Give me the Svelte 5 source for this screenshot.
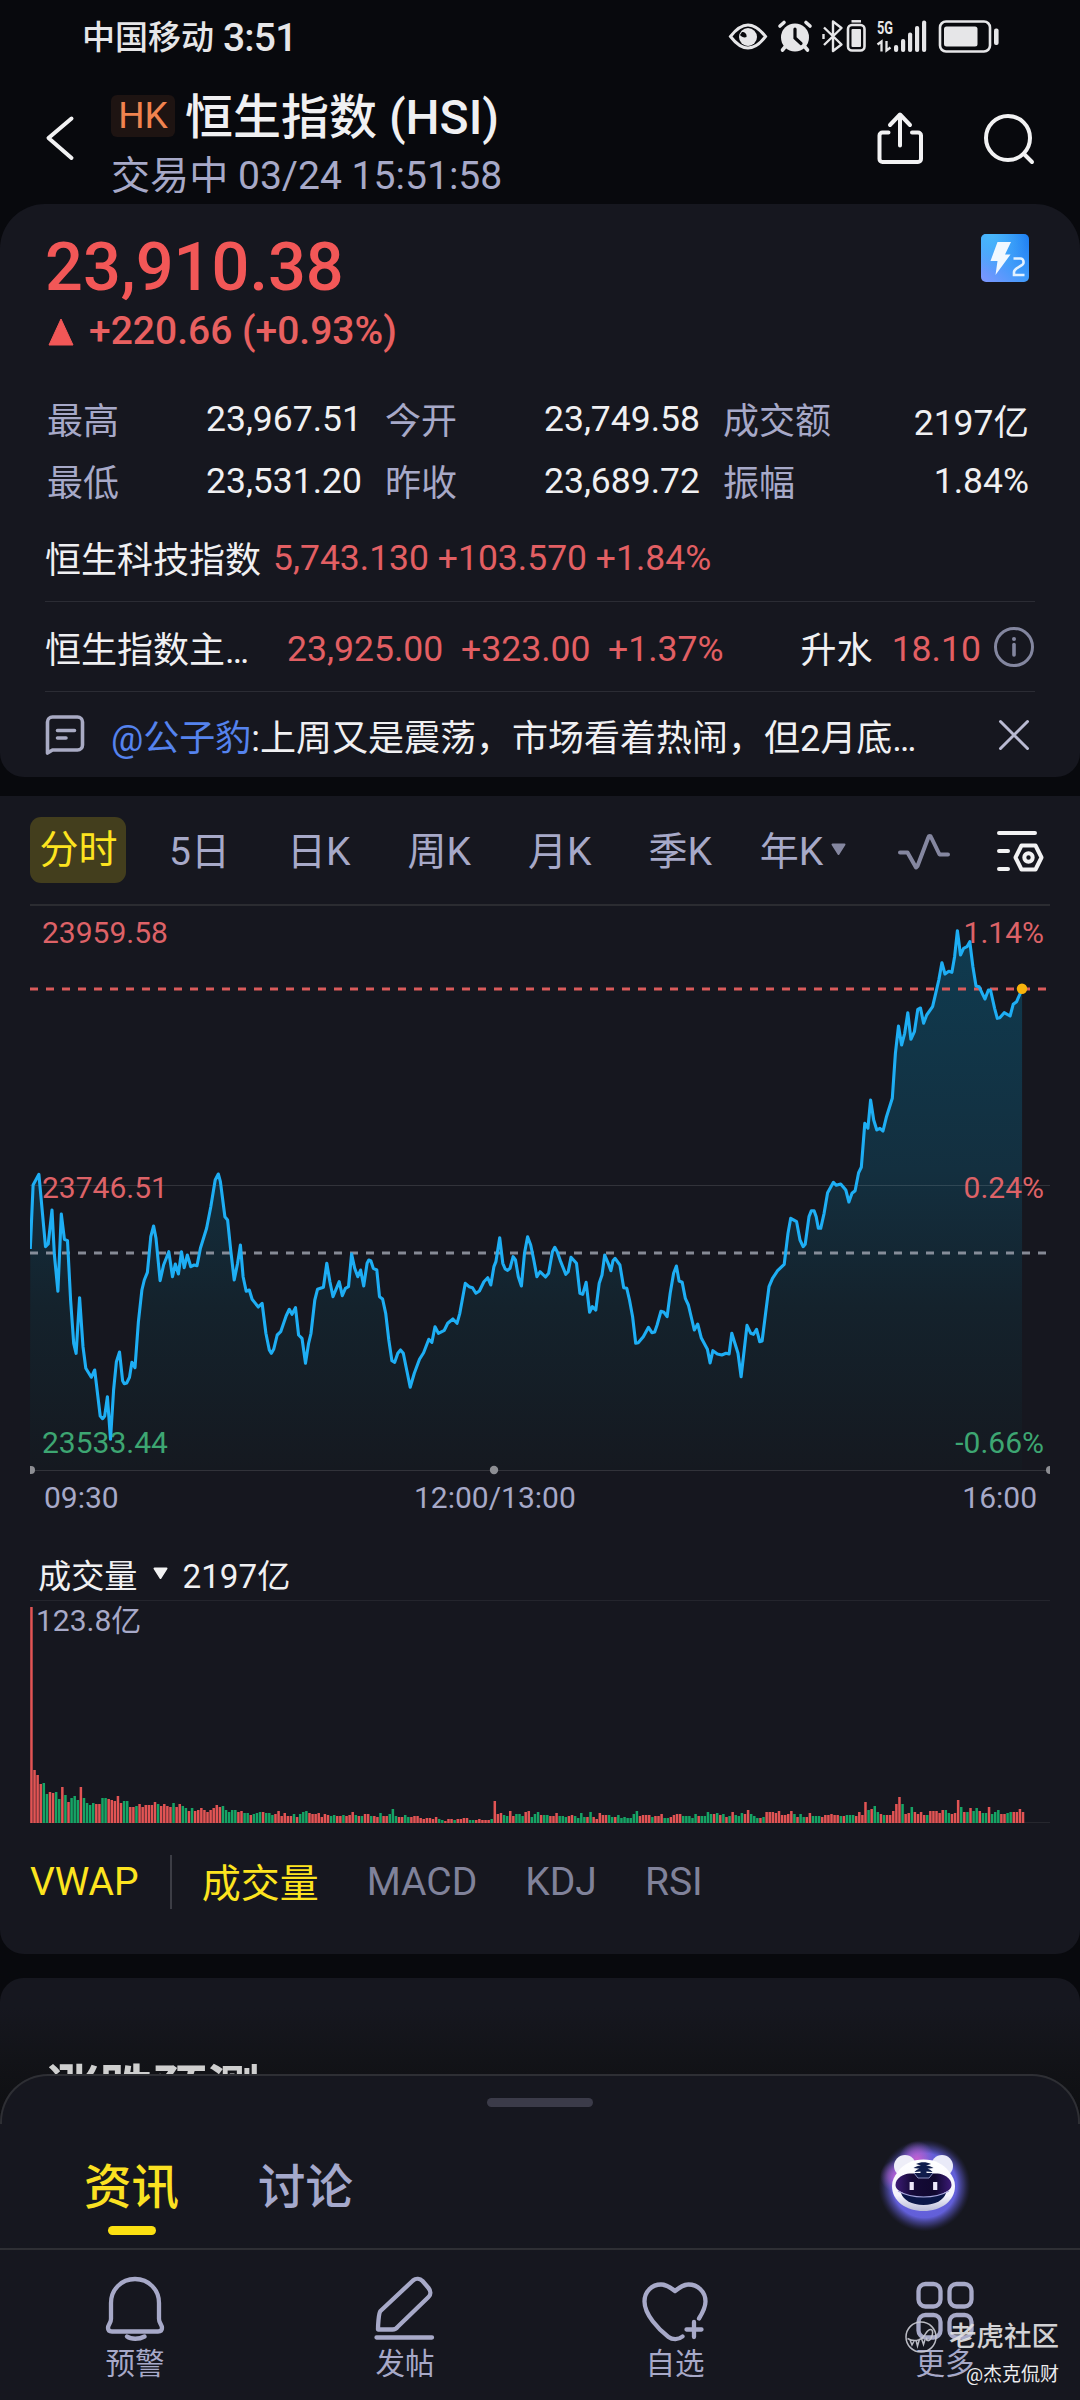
<script>
  const stats = [
    ['最高', '23,967.51'], ['今开', '23,749.58'], ['成交额', '2197亿'],
    ['最低', '23,531.20'], ['昨收', '23,689.72'], ['振幅', '1.84%'],
  ];
  const periods = ['5日', '日K', '周K', '月K', '季K'];
  const indicators = ['MACD', 'KDJ', 'RSI'];

  // Intraday samples: morning and afternoon sessions, x then y in chart units.
  const morning = '88,297 96,105 113,73 132,290 140,282 151,180 158,315 168,424 178,192 187,268 196,272 205,450 214,580 221,610 231,443 241,590 249,655 265,682 275,660 291,798 298,806 304,798 312,740 321,868 330,720 338,635 347,606 356,692 361,701 368,699 376,682 383,637 392,653 402,515 412,420 419,390 428,367 438,260 446,228 453,265 465,392 475,345 490,305 501,380 509,342 518,372 527,305 535,353 544,315 554,350 564,345 572,347 582,295 600,235 612,170 625,90 634,72 640,95 653,200 661,210 670,300 680,390 690,340 698,285 706,380 715,424 724,420 732,448 750,471 761,460 772,550 782,600 788,610 795,597 805,555 815,545 831,497 840,478 848,493 858,473 867,555 877,565 887,640 896,580 903,550 914,450 922,418 939,412 949,340 958,395 967,440 985,395 994,437 1003,415 1012,410 1021,312 1030,355 1039,380 1047,360 1056,408 1066,340 1071,330 1077,333 1084,355 1094,360 1102,440 1111,447 1120,490 1129,570 1138,632 1146,637 1155,610 1163,600 1171,610 1181,660 1191,712 1203,670 1218,628 1230,608 1245,568 1254,577 1263,530 1273,550 1290,541 1300,520 1315,507 1327,520 1335,490 1351,400 1362,410 1372,413 1382,430 1392,423 1405,395 1416,383 1425,405 1434,350 1440,335 1451,263 1460,340 1467,357 1474,361 1481,355 1490,320 1497,330 1505,380 1514,408 1523,310 1532,260 1541,285 1550,330 1559,380';
  const afternoon = '0,365 16,381 25,370 36,305 43,292 50,305 60,335 75,373 82,365 90,322 106,340 116,430 124,433 134,397 144,487 152,470 162,480 172,400 180,375 188,315 198,340 206,362 212,332 218,325 232,345 243,413 252,415 260,450 269,500 278,580 285,578 300,560 315,532 325,548 333,546 340,525 351,484 360,487 369,500 378,430 388,370 396,348 404,393 413,397 422,445 431,465 448,540 458,522 468,563 486,598 494,639 502,602 515,612 528,615 540,610 549,612 557,550 566,580 575,610 584,680 593,600 601,526 612,550 620,553 629,538 638,575 645,573 655,490 665,410 675,385 690,362 709,343 720,250 728,205 745,215 755,270 764,290 770,283 781,200 788,182 796,182 802,200 808,235 815,235 825,190 835,128 852,97 860,106 873,102 888,120 897,156 906,130 915,122 925,68 933,52 937,0 943,-80 952,-65 960,-150 969,-90 978,-60 987,-65 996,-57 1006,-100 1023,-155 1032,-290 1041,-372 1050,-315 1059,-350 1068,-412 1077,-332 1087,-355 1097,-422 1105,-426 1114,-380 1123,-405 1140,-430 1149,-470 1158,-510 1167,-562 1176,-528 1187,-536 1196,-533 1204,-580 1212,-658 1221,-585 1230,-605 1240,-610 1248,-625 1257,-550 1266,-492 1275,-490 1284,-470 1292,-453 1302,-480 1308,-480 1320,-425 1328,-395 1335,-397 1348,-412 1365,-402 1374,-437 1384,-445 1400,-483';
  const parse = (text, shift) =>
    text.split(' ').map((pair) => {
      const [x, y] = pair.split(',').map(Number);
      return `${((x + shift) / 2.9037 - 30).toFixed(1)},${(y / 3 + 244).toFixed(1)}`;
    });
  const line = [...parse(morning, 0), ...parse(afternoon, 1568)].join(' ');
  const area = `0,564 ${line} 992,564`;

  // Per-minute turnover: R for a rising minute, G for a falling one.
  const volume = (
    'R216 R53 R48 R39 G40 G29 R31 R30 G31 G24 R36 G28 R21 G25 G27 G23 R36 G25 G20 G18 G20 R19 R19 G25 G25 R24 R23 R22 R27 R20 G22 G22 R16 R16 G17 R19 R16 R18 R18 R18 R21 G19 R17 R19 R17 R16 G20 R16 R19 G17 G15 R12 G15 R12 R13 R15 R13 R11 R13 R15 R18 R16 G17 G13 G11 G13 G13 R11 R12 G10 G10 R8 G9 G10 G11 R11 G10 G10 G8 R9 R12 R7 R10 R7 R7 G9 R6 G9 G11 G12 R10 R9 R9 R10 R6 R9 R8 G7 G8 R7 R7 G8 R7 R8 R11 G8 R7 G7 R9 R9 G7 R7 R6 G10 R7 R7 G9 G14 G7 R6 R6 G8 G6 R6 R7 R7 R5 R4 R5 R5 R4 R6 G4 G3 R2 R4 R4 G3 R4 R4 R5 R5 G3 G3 R3 R4 R3 R3 R3 G4 R22 R9 R10 G8 G7 R12 R7 G9 G9 G7 R11 R12 G6 G9 G11 ' +
    'R8 G8 G8 R7 R7 R10 G7 G7 G6 R7 R8 G7 G5 G10 G6 R6 G11 R6 R4 R10 R8 R8 G8 G6 R6 G8 G5 G6 G5 G5 G9 G12 R7 R8 R8 R8 G6 R7 R7 R9 G5 G5 R6 R8 R9 R9 G7 G7 G7 G5 G9 R7 G7 G7 G11 G9 R9 G10 R8 G9 R6 G7 R11 G8 G7 G10 R9 R13 G9 G7 G5 R5 G6 R11 R11 R11 R10 R12 R8 R8 R9 R12 G9 R6 G9 G6 R6 R10 G7 G7 G7 R6 R8 R8 R9 R8 R8 G7 R7 G8 G8 G8 R7 R11 R8 R21 G13 R14 G17 G11 R9 G8 R8 R8 R12 R19 R26 G19 R9 R10 G16 R11 R9 R11 R8 G8 R12 R12 R12 R10 R13 G13 G10 R9 R10 R23 G16 R11 G11 R15 G12 G15 R12 G10 G10 R16 G9 G11 G13 R9 R9 G10 G11 R11 R11 R14 R11'
  )
    .split(' ')
    .map((item, i) => ({ up: item[0] === 'R', h: Number(item.slice(1)), x: 0.2 + i * 3.089 }));
</script>

<div class="page">
  <div class="statusbar">
    <div class="carrier"><span>中国移动</span><b>3:51</b></div>
    <svg width="274" height="40" viewBox="728 17 274 40" fill="none" stroke="#e6e6e8">
      <path d="M730.500 36.500C737 28 742 25 748 25s11 3 17.500 11.500C759 45 754 48 748 48s-11-3-17.500-11.500Z" stroke-width="3" />
      <circle cx="748" cy="37" r="9" fill="#e6e6e8" stroke="none" />
      <path d="M742 32c3 0 5 2 4.500 5-2 1-5 0-6.500-2Z" fill="#08090d" stroke="none" />
      <circle cx="795" cy="37.500" r="14" fill="#e6e6e8" stroke="none" />
      <path d="M795 29v9l6 5.500" stroke="#08090d" stroke-width="3.200" stroke-linecap="round" />
      <path d="M780 26l4-3.500M806 22.500l4 3.500M785 47l-2.500 3M805 47l2.500 3" stroke-width="3.600" stroke-linecap="round" />
      <path d="M824 27.500l17.500 17L833 51V21.500l8.500 6.500L824 45M823.500 34v5" stroke-width="2.400" stroke-linejoin="round" />
      <rect x="848" y="25" width="16.500" height="25.500" rx="4" stroke-width="2.600" />
      <rect x="851.500" y="29" width="9.500" height="18" rx="1" fill="#e6e6e8" stroke="none" />
      <path d="M851.500 21.300h9.500" stroke-width="2.500" />
      <path d="M877.500 44.500l4-3v10M890.500 47.500l-4 3v-9.500" stroke-width="2.300" />
      <g fill="#e6e6e8" stroke="none">
        <rect x="894" y="45" width="4.200" height="7" rx="2" />
        <rect x="901" y="39" width="4.200" height="13" rx="2" />
        <rect x="908" y="32.500" width="4.200" height="19.500" rx="2" />
        <rect x="915" y="26" width="4.200" height="26" rx="2" />
        <rect x="922" y="20.500" width="4.200" height="31.500" rx="2" />
        <rect x="944" y="26.500" width="33.500" height="20" rx="2.500" />
        <rect x="994" y="28.500" width="4.600" height="16.500" rx="2" />
      </g>
      <rect x="940" y="21.500" width="50" height="30" rx="6" stroke-width="2.600" />
      <text x="877" y="34" class="gen" textLength="16" lengthAdjust="spacingAndGlyphs">5G</text>
    </svg>
  </div>

  <header>
    <svg class="back" width="32" height="50" viewBox="45 113 32 50" fill="none" stroke="#f2f2f3" stroke-width="4" stroke-linecap="round" stroke-linejoin="round"><path d="M71.500 118.500 48.500 138l23 20" /></svg>
    <div class="titles">
      <div class="title"><span class="market">HK</span>恒生指数 (HSI)</div>
      <div class="sub">交易中 03/24 15:51:58</div>
    </div>
    <svg class="actions" width="166" height="60" viewBox="874 108 166 60" fill="none" stroke="#f2f2f3" stroke-width="4" stroke-linecap="round" stroke-linejoin="round">
      <path d="M888.500 132.500h-6a3 3 0 0 0-3 3v23.500a3 3 0 0 0 3 3h35.500a3 3 0 0 0 3-3v-23.500a3 3 0 0 0-3-3h-6M900 145.500V115.500M890 125l10-10.500 10 10.500" />
      <circle cx="1008" cy="138" r="22" />
      <path d="M1024 154l8 8" />
    </svg>
  </header>

  <section class="card quote">
    <div class="top">
      <div>
        <div class="price">23,910.38</div>
        <div class="change"><svg width="26" height="28" viewBox="0 0 26 28"><path d="M13 1 25 27H1Z" fill="#f25757" stroke="#f25757" stroke-linejoin="round" /></svg>+220.66 (+0.93%)</div>
      </div>
      <svg class="level" width="48" height="48" viewBox="0 0 48 48">
        <defs>
          <linearGradient id="lv" x1="0" y1="1" x2="1" y2="0"><stop offset="0" stop-color="#7f96ff" /><stop offset=".5" stop-color="#3f9bfa" /><stop offset="1" stop-color="#1b7cf2" /></linearGradient>
          <radialGradient id="lv2" cx=".2" cy="0" r=".8"><stop offset="0" stop-color="#49b8fb" /><stop offset="1" stop-color="#49b8fb" stop-opacity="0" /></radialGradient>
        </defs>
        <rect width="48" height="48" rx="5" fill="url(#lv)" /><rect width="48" height="48" rx="5" fill="url(#lv2)" />
        <path d="M16.500 8H30l-6 12.500h5.500L14.500 41l2-14H9.500Z" fill="#f1f8ff" />
        <path d="M32.500 24.500h7a3 3 0 0 1 3 3v1.500c0 3-9.500 4.500-9.500 9V41h10.500" fill="none" stroke="#e2f1ff" stroke-width="2.600" />
      </svg>
    </div>
    <div class="stats">
      {#each stats as [label, value]}
        <div class="stat"><span>{label}</span><span class="val">{value}</span></div>
      {/each}
    </div>
    <div class="row tech"><span class="index">恒生科技指数</span><span class="up">5,743.130 +103.570 +1.84%</span></div>
    <div class="row future">
      <span class="name">恒生指数主…</span>
      <span class="up n1">23,925.00</span><span class="up n2">+323.00</span><span class="up n3">+1.37%</span>
      <span class="premium">升水</span><span class="up n4">18.10</span>
      <svg width="42" height="42" viewBox="0 0 42 42" fill="none" stroke="#83869f"><circle cx="21" cy="21" r="18.500" stroke-width="3" /><path d="M21 18.500V29" stroke-width="3.600" stroke-linecap="round" /><circle cx="21" cy="13" r="2" fill="#83869f" stroke="none" /></svg>
    </div>
    <div class="row comment">
      <svg width="40" height="42" viewBox="46 713 40 42" fill="none" stroke="#a9abc4" stroke-width="3.600" stroke-linecap="round" stroke-linejoin="round"><path d="M48.500 752V721a5 5 0 0 1 5-5h25a5 5 0 0 1 5 5v23a5 5 0 0 1-5 5H53.500ZM58.500 729.500h17M58.500 737h8.500" /></svg>
      <div class="post"><span class="user">@公子豹</span>:上周又是震荡，市场看着热闹，但2月底…</div>
      <svg width="34" height="34" viewBox="0 0 34 34" stroke="#b9bad2" stroke-width="3" stroke-linecap="round"><path d="M3.500 3.500l27 27M30.500 3.500l-27 27" /></svg>
    </div>
  </section>

  <section class="chartcard">
    <div class="tabs">
      <span class="tab active">分时</span>
      {#each periods as p}<span class="tab">{p}</span>{/each}
      <span class="tab year">年K</span>
      <svg class="caret" width="17" height="13" viewBox="0 0 17 13"><path d="M2.500 1.500h12l-6 9.500Z" fill="#8587a0" stroke="#8587a0" stroke-width="2" stroke-linejoin="round" /></svg>
      <svg class="pulse" width="56" height="40" viewBox="896 832 56 40" fill="none" stroke="#8587a0" stroke-width="4" stroke-linecap="round" stroke-linejoin="round"><path d="M900 852.500h7.500l8.500 15 1.500-1.500 11-29c.5-1.500 2-1.500 2.500 0l8.500 17.500h8.500" /></svg>
      <svg class="setup" width="52" height="46" viewBox="994 828 52 46" fill="none" stroke="#f2f2f3" stroke-width="4" stroke-linecap="round" stroke-linejoin="round"><path d="M999 833h36M999 851h9M999 869h9M1021.500 845.500h14l6 12-6 12h-14l-6-12Z" /><circle cx="1028.500" cy="857.500" r="4.200" stroke-width="4" /></svg>
    </div>

    <svg class="chart" width="1020" height="572" viewBox="0 0 1020 572">
      <defs><linearGradient id="fill" gradientUnits="userSpaceOnUse" x1="0" y1="20" x2="0" y2="564"><stop offset="0" stop-color="#0f3b50" /><stop offset=".45" stop-color="#132f3f" /><stop offset=".7" stop-color="#14222c" /><stop offset="1" stop-color="#151920" /></linearGradient></defs>
      <polygon points={area} fill="url(#fill)" />
      <path d="M0 279.500h1020M0 564.500h1020" stroke="#fff" stroke-opacity=".12" />
      <g class="axis">
        <text class="red" x="12" y="36.500">23959.58</text><text class="red" x="12" y="291.500">23746.51</text><text class="green" x="12" y="546.500">23533.44</text>
        <text class="red end" x="1014" y="36.500">1.14%</text><text class="red end" x="1014" y="291.500">0.24%</text><text class="green end" x="1014" y="546.500">-0.66%</text>
      </g>
      <path d="M0 83h1017" stroke="#d95b5b" stroke-width="3" stroke-dasharray="8 8" />
      <path d="M0 347h1017" stroke="#a3a8b3" stroke-opacity=".8" stroke-width="3" stroke-dasharray="8 8" />
      <polyline points={line} fill="none" stroke="#1eaef4" stroke-width="3.100" stroke-linejoin="round" />
      <circle cx="992" cy="82.700" r="5.200" fill="#f8b30c" />
      <g fill="#8d8e93"><circle cx="1" cy="564" r="4" /><circle cx="464" cy="564" r="4.200" /><circle cx="1020" cy="564" r="4" /></g>
    </svg>
    <div class="times"><span>09:30</span><span>12:00/13:00</span><span>16:00</span></div>

    <div class="volhead"><span class="cjk">成交量</span><svg width="17" height="13" viewBox="0 0 17 13"><path d="M2.500 1.500h12l-6 9.500Z" fill="#f2f2f3" stroke="#f2f2f3" stroke-width="2" stroke-linejoin="round" /></svg><span class="cjk">2197亿</span></div>
    <svg class="volume" width="1020" height="223" viewBox="0 0 1020 223">
      <path d="M0 221.500h1020" stroke="#26272e" />
      {#each volume as bar}<rect x={bar.x} y={222 - bar.h} width="2.500" height={bar.h} fill={bar.up ? '#e25454' : '#16a465'} />{/each}
      <text x="6" y="29.500">123.8亿</text>
    </svg>
    <div class="indicators">
      <span class="on">VWAP</span><i></i><span class="on cjk">成交量</span>
      {#each indicators as name}<span>{name}</span>{/each}
    </div>
  </section>

  <section class="card forecast">涨跌预测</section>

  <section class="sheet">
    <div class="handle"></div>
    <div class="sheettabs">
      <span class="on">资讯</span><span>讨论</span>
      <svg class="robot" width="110" height="110" viewBox="0 0 110 110">
        <defs>
          <radialGradient id="glow"><stop offset="0" stop-color="#6d66e8" /><stop offset=".7" stop-color="#625fd8" /><stop offset=".86" stop-color="#4e4ba8" stop-opacity=".5" /><stop offset="1" stop-color="#33306b" stop-opacity="0" /></radialGradient>
          <radialGradient id="pink"><stop offset="0" stop-color="#c65fd0" /><stop offset=".5" stop-color="#b060cf" stop-opacity=".6" /><stop offset="1" stop-color="#8a5fd0" stop-opacity="0" /></radialGradient>
          <linearGradient id="head" x1="0" y1="0" x2="0" y2="1"><stop offset="0" stop-color="#fff" /><stop offset=".7" stop-color="#f4f4fb" /><stop offset="1" stop-color="#b9bcd8" /></linearGradient>
          <linearGradient id="visor"><stop offset="0" stop-color="#3d1c75" /><stop offset=".3" stop-color="#150a38" /><stop offset=".7" stop-color="#10082e" /><stop offset="1" stop-color="#3c1a78" /></linearGradient>
        </defs>
        <circle cx="55.500" cy="56.500" r="46" fill="url(#glow)" />
        <circle cx="48" cy="30" r="18" fill="url(#pink)" /><circle cx="27" cy="47" r="16" fill="url(#pink)" opacity=".85" />
        <circle cx="36" cy="37" r="11" fill="#eeeef8" /><circle cx="73" cy="37" r="11" fill="#e9eaf8" />
        <path d="M54.500 30.500c11 0 20 4.500 25.500 12 4 5.500 6 9 6 14.500 0 15-14 25-31.500 25S23 72 23 57c0-5.500 2-9 6-14.500 5.500-7.500 14.500-12 25.500-12Z" fill="url(#head)" />
        <path d="M32 64h45c-2 7-11 12-22.500 12S34 71 32 64Z" fill="#0b1748" />
        <path d="M26.500 56c0-7 8-11 14-11.500h28c6 .5 14 4.500 14 11.500 0 6-10 11-28 11s-28-5-28-11Z" fill="url(#visor)" />
        <path d="M29 62c9 5 16 6 25.500 6S71 67 80 62" fill="none" stroke="#a9a6dc" stroke-width="1.200" />
        <path d="M45 44l4 5h11l4-5" fill="#101a49" stroke="#8a90c0" stroke-width="1" />
        <path d="M47 35c5-2.500 10-2.500 15 0l-5 1.500c3 .3 5 1 7.500 2.500l-6 .8c2 .7 4 1.600 5 3.200l-6-.4v4h-6v-4l-6 .4c1-1.600 3-2.500 5-3.200l-6-.8c2.500-1.500 4.500-2.200 7.500-2.500Z" fill="#101d4d" />
        <path d="M42.700 53v8M66.200 53v8" stroke="#eee9fb" stroke-width="4.200" />
      </svg>
    </div>
    <nav>
      <div><svg width="70" height="74" viewBox="100 2272 70 74"><path d="M135 2279c-14 0-24 11-24 24v16c0 4-3 5.500-3 9 0 2.500 1.500 3.500 4 3.500h46c2.500 0 4-1 4-3.500 0-3.500-3-5-3-9v-16c0-13-10-24-24-24ZM127 2336.500c4 3 12 3 17.500 0" /></svg>预警</div>
      <div><svg width="70" height="74" viewBox="370 2272 70 74"><path d="M413 2280.500l-32.500 30.500c-2 2-2.500 16-2.500 18.500h14.500c2 0 4-1 5-2.500l31-30c2.500-2.500 2.500-6 0-9l-6-7c-2.500-2.500-6.500-3-9.500-.5ZM376.500 2337.500h55.500" /></svg>发帖</div>
      <div><svg width="70" height="74" viewBox="640 2272 70 74"><path d="M699 2318.500c5-8 6.500-12 6.500-17 0-10-8-17-17-17-5 0-8 2-13.500 6.500-5.500-4.500-9-6.500-14-6.500-9 0-16.500 7-16.500 17 0 13 14 28 24 35.500 4 3 10 3 14-.5M694 2322v15M686.500 2329.500h15" /></svg>自选</div>
      <div><svg width="70" height="74" viewBox="910 2272 70 74"><rect x="918.500" y="2284" width="22" height="22.500" rx="7" /><rect x="949.500" y="2284" width="22" height="22.500" rx="7" /><rect x="918.500" y="2315" width="22" height="22.500" rx="7" /><rect x="949.500" y="2315" width="22" height="22.500" rx="7" /></svg>更多</div>
    </nav>
    <div class="watermark">
      <div class="brand"><svg width="34" height="34" viewBox="0 0 34 34" fill="none" stroke="#c9cad2" stroke-width="1.500"><circle cx="17" cy="17" r="15" /><path d="M3.500 18.500c6 3.500 13 2.500 17-3 2-3 3-6 6-6s2.500 5 .5 9c-2 3.500-5 2.500-4.500-1M6 20l2 5 2.500-5M12 20l1.500 6 2-7M17.500 18.500l2 6 1.500-5" /></svg>老虎社区</div>
      <div class="author">@杰克侃财</div>
    </div>
  </section>
</div>

<style>
  :global(body) { margin: 0; background: #08090d; }
  .page { width: 1080px; height: 2400px; overflow: hidden; display: flex; flex-direction: column; background: #08090d; color: #f0f0f2; font-family: Roboto, 'Noto Sans CJK SC', sans-serif; font-size: 36px; white-space: nowrap; }
  svg { display: block; flex: none; }
  .statusbar { height: 74px; box-sizing: border-box; padding: 0 78px 0 82px; display: flex; align-items: center; justify-content: space-between; color: #e6e6e8; }
  .carrier { display: flex; align-items: center; gap: 9px; padding-top: 2px; font-size: 33px; font-weight: 500; line-height: 40px; }
  .carrier b { font-size: 39px; font-weight: 500; letter-spacing: -0.800px; }
  .gen { font: 700 18px Roboto, sans-serif; fill: #e6e6e8; stroke: none; }
  header { height: 130px; display: flex; box-sizing: border-box; padding: 13px 40px 0 45px; align-items: flex-start; }
  .back { margin-top: 26px; }
  .titles { margin-left: 33px; padding-top: 2px; flex: 1; }
  .title { height: 58px; line-height: 58px; font-size: 48px; font-weight: 500; display: flex; align-items: center; }
  .market { width: 64px; height: 42px; line-height: 42px; margin: -5px 10px 0 1px; text-align: center; border-radius: 6px; font-size: 37px; font-weight: 400; color: #f0834f; background: #1e1412; }
  .sub { line-height: 58px; padding-left: 1px; font-size: 39.100px; color: #a7a9c8; }
  .actions { margin-top: 21px; }
  .card { background: #16171f; }
  .quote { flex: none; height: 573px; box-sizing: border-box; padding: 24px 45px 0; border-radius: 45px 45px 24px 24px; }
  .top { display: flex; justify-content: space-between; }
  .price { height: 76px; line-height: 79px; font-size: 66.700px; font-weight: 500; color: #f25757; }
  .change { height: 54px; line-height: 54px; display: flex; align-items: center; gap: 15px; padding-left: 3px; font-size: 39px; font-weight: 500; color: #e86060; }
  .change svg { margin-top: 2px; }
  .level { margin: 6px 6px 0 0; }
  .stats { margin-top: 30px; padding: 0 5px 0 2px; display: grid; grid-template-columns: 315px 315px 306px; column-gap: 23px; grid-auto-rows: 62px; }
  .stat { display: flex; justify-content: space-between; align-items: center; color: #a7a9c8; }
  .stat span:first-child, .index { padding-bottom: 3px; }
  .val { color: #f0f0f2; font-size: 35.500px; }
  .up { color: #e25f63; font-size: 35.600px; }
  .row { display: flex; align-items: center; box-sizing: border-box; }
  .tech { margin-top: 3px; height: 87px; gap: 12px; border-bottom: 1px solid #2b2c34; }
  .future { height: 90px; border-bottom: 1px solid #2b2c34; }
  .future .up { padding-top: 4px; }
  .name { width: 242px; }
  .n1 { width: 174px; }
  .n2 { width: 147px; }
  .premium { margin-left: auto; }
  .n4 { margin: 0 12px 0 19px; }
  .tech .up { font-size: 35.500px; }
  .comment { height: 85px; }
  .post { flex: 1; padding: 0 0 0 26px; }
  .user { color: #5583ee; }
  .comment > svg:last-child { margin-right: 4px; }
  .chartcard { flex: none; margin-top: 19px; height: 1158px; box-sizing: border-box; padding: 0 30px; background: #16171f; border-radius: 0 0 24px 24px; }
  .tabs { height: 110px; box-sizing: border-box; border-bottom: 2px solid #2b2c31; display: flex; align-items: center; font-size: 39px; color: #a7a9c8; }
  .tab { line-height: 60px; margin-right: 57px; padding-top: 3px; }
  .active { width: 96px; height: 66px; line-height: 67px; padding: 0 0 0 1px; box-sizing: border-box; text-align: center; border-radius: 11px; background: #433e1d; color: #fde41f; margin-right: 43px; }
  .year { margin: 0 7px 0 -9px; }
  .caret { margin-top: -1px; }
  .setup { margin-left: auto; margin-right: 4px; margin-top: 1px; }
  .pulse { margin-left: 49px; margin-top: 3px; }
  .axis text { font-size: 30px; }
  .red { fill: #dd6267; }
  .green { fill: #3da672; }
  .end { text-anchor: end; }
  .times { height: 38px; line-height: 39px; padding: 0 13px 0 14px; display: grid; grid-template-columns: 370px auto 1fr; font-size: 30px; color: #a7a9c8; }
  .times span:last-child { text-align: right; }
  .volhead { margin-top: 33px; height: 52px; box-sizing: border-box; border-bottom: 1px solid #24252d; padding-left: 8px; display: flex; align-items: center; gap: 14px; font-size: 33.200px; }
  .volhead svg { margin-top: -3px; }
  .cjk { padding-bottom: 3px; }
  .volume text { font-size: 30px; fill: #a7a9c8; }
  .indicators { height: 115px; display: flex; align-items: center; gap: 48px; font-size: 39px; color: #80829a; }
  .indicators .on { color: #fde41f; }
  .indicators i { width: 2px; height: 54px; background: #3c3d45; margin: 0 -18px 0 -17px; }
  .forecast { flex: none; margin-top: 24px; height: 146px; box-sizing: border-box; padding: 83px 0 0 46px; border-radius: 24px 24px 0 0; background: linear-gradient(#16171f 20%, #111216 66%, #0e0f12); color: #cfcfcf; font-size: 53.500px; line-height: 60px; font-weight: 700; }
  .sheet { position: relative; flex: none; margin-top: -50px; height: 326px; background: #16171f; border-radius: 48px 48px 0 0; }
  .sheet::before { content: ''; position: absolute; inset: 0 0 auto; height: 50px; box-sizing: border-box; border: 2px solid #2e2f34; border-bottom: 0; border-radius: 48px 48px 0 0; }
  .handle { width: 106px; height: 9px; border-radius: 5px; background: #3b3b49; position: relative; top: 24px; margin: 0 auto; }
  .sheettabs { height: 167px; box-sizing: border-box; border-bottom: 2px solid #2e2f34; display: flex; align-items: center; padding: 37px 101px 0 84px; gap: 79px; font-size: 47.500px; font-weight: 500; color: #a5a9cc; }
  .sheettabs span { position: relative; line-height: 60px; padding-top: 7px; }
  .sheettabs .on { color: #fbe122; }
  .sheettabs .on::after { content: ''; position: absolute; left: 24px; bottom: -17px; width: 48px; height: 9px; border-radius: 5px; background: #fbe011; }
  .robot { margin-left: auto; }
  nav { height: 150px; display: grid; grid-template-columns: repeat(4, 1fr); font-size: 29.500px; line-height: 36px; color: #a7a9c8; }
  nav div { display: flex; flex-direction: column; align-items: center; padding-top: 22px; box-sizing: border-box; }
  nav svg { fill: none; stroke: #a7a9c8; stroke-width: 4.300; stroke-linecap: round; stroke-linejoin: round; }
  .watermark { position: absolute; right: 21px; bottom: 12px; text-align: right; color: #e2e2e4; }
  .brand { display: flex; align-items: center; gap: 11px; font-size: 27.500px; font-weight: 500; line-height: 34px; opacity: .92; }
  .author { font-size: 19px; line-height: 26px; margin-top: 8px; color: #ececee; }
</style>
